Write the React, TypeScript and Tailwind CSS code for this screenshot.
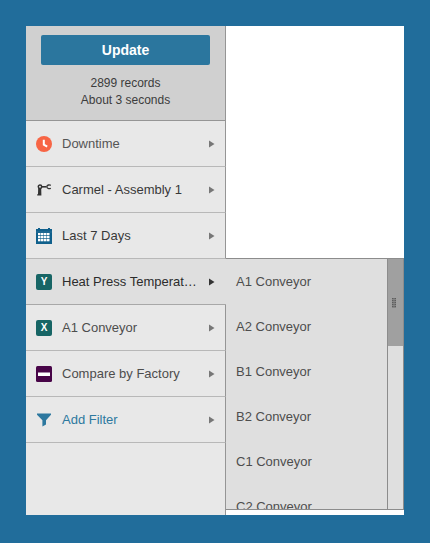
import type { ReactNode } from "react";

type Filter = {
  label: string;
  icon: ReactNode;
  tone: string;
  active?: boolean;
};

function ClockIcon() {
  return (
    <svg viewBox="0 0 16 16" className="size-4" aria-hidden="true">
      <circle cx="8" cy="8" r="8" fill="#f76545" />
      <path d="M7.8 3.8v4.8l3.4 2" fill="none" stroke="#fff" strokeWidth="2" />
    </svg>
  );
}

function RobotArmIcon() {
  return (
    <svg viewBox="0 0 16 16" className="size-4" aria-hidden="true">
      <path d="M2.2 5 5.2 5.2 5.4 13.4H1.2V12.6l.8-.6z" fill="#333" />
      <circle cx="4" cy="4.8" r="1.7" fill="#e8e8e8" stroke="#333" strokeWidth="1.5" />
      <path d="M5.4 4.8H10.4" stroke="#333" strokeWidth="1.6" />
      <path d="M14.8 3.4c-1-.6-3.8-.9-4 1.4.2 2.3 3 2 4 1.4" fill="none" stroke="#333" strokeWidth="1.3" />
    </svg>
  );
}

function CalendarIcon() {
  return (
    <svg viewBox="0 0 16 16" className="size-4" aria-hidden="true">
      <path d="M0 1h2V0h2v1h8V0h2v1h2v15H0z" fill="#10608c" />
      <path d="M0 4h16" stroke="#3a7da3" strokeWidth=".6" />
      <g fill="#fff">
        {[5, 8, 11].map((y) =>
          [2, 5, 8, 11].map((x) => <rect key={`${x}-${y}`} x={x} y={y} width="2.5" height="2.3" />),
        )}
      </g>
    </svg>
  );
}

function AxisIcon({ axis }: { axis: string }) {
  return (
    <span
      aria-hidden="true"
      className="flex size-4 items-center justify-center rounded-xs bg-[#176565] text-[10px] leading-none font-bold text-white"
    >
      {axis}
    </span>
  );
}

function CompareIcon() {
  return (
    <svg viewBox="0 0 16 16" className="size-4" aria-hidden="true">
      <rect width="16" height="16" rx="1.5" fill="#480548" />
      <rect x="2" y="6.5" width="12" height="3.5" fill="#fff" />
    </svg>
  );
}

function FunnelIcon() {
  return (
    <svg viewBox="0 0 16 16" className="size-4" aria-hidden="true">
      <path d="M1 1.5h14v1.2L10 8.2V12.5L6.4 14.5V8.2L1 2.7z" fill="#2d789f" />
    </svg>
  );
}

const filters: Filter[] = [
  { label: "Downtime", icon: <ClockIcon />, tone: "text-[#555]" },
  { label: "Carmel - Assembly 1", icon: <RobotArmIcon />, tone: "text-[#383838]" },
  { label: "Last 7 Days", icon: <CalendarIcon />, tone: "text-[#383838]" },
  { label: "Heat Press Temperat…", icon: <AxisIcon axis="Y" />, tone: "text-[#2c2c2c]", active: true },
  { label: "A1 Conveyor", icon: <AxisIcon axis="X" />, tone: "text-[#4d4d4d]" },
  { label: "Compare by Factory", icon: <CompareIcon />, tone: "text-[#4d4d4d]" },
  { label: "Add Filter", icon: <FunnelIcon />, tone: "text-[#2d789f]" },
];

const options = ["A1 Conveyor", "A2 Conveyor", "B1 Conveyor", "B2 Conveyor", "C1 Conveyor", "C2 Conveyor"];

function FilterRow({ filter }: { filter: Filter }) {
  return (
    <li>
      <button
        type="button"
        aria-haspopup="menu"
        aria-expanded={!!filter.active}
        className={`flex h-[46px] w-full items-center border-b px-2.5 text-left ${filter.tone} ${
          filter.active
            ? "border-b-[#a8a8a8] bg-[#dfdfdf]"
            : "border-r border-r-[#959595] border-b-[#b8b8b8] bg-[#e8e8e8]"
        }`}
      >
        {filter.icon}
        <span className="ml-2.5 flex-1 whitespace-nowrap">{filter.label}</span>
        <svg
          viewBox="0 0 6 8"
          className={`h-2 w-1.5 ${filter.active ? "mr-px text-[#333]" : "text-[#777]"}`}
          aria-hidden="true"
        >
          <path d="M0 .5v7L5.5 4z" fill="currentColor" />
        </svg>
      </button>
    </li>
  );
}

function OptionsMenu() {
  return (
    <div className="mb-[5px] flex h-[252px] border-y border-r border-[#8c8c8c] bg-[#dfdfdf]">
      <ul className="flex-1 overflow-hidden text-[#4d4d4d]">
        {options.map((option) => (
          <li key={option}>
            <button type="button" className="h-[45px] w-full px-2.5 text-left">
              {option}
            </button>
          </li>
        ))}
      </ul>
      <div className="w-4 border-l border-[#8c8c8c]">
        <div className="flex h-[87px] items-center justify-center bg-[#a0a0a0] pr-[3px]">
          <svg viewBox="0 0 4 10" className="h-2.5 w-1" aria-hidden="true">
            <rect width="4" height="10" fill="#858585" />
            <path d="M0 .5h4M0 2.5h4M0 4.5h4M0 6.5h4M0 8.5h4" stroke="#5c5c5c" strokeDasharray="1 .5" />
          </svg>
        </div>
      </div>
    </div>
  );
}

export default function App() {
  return (
    <div className="flex min-h-screen bg-[#216d9b] px-[26px] pt-[26px] pb-7 font-['Liberation_Sans',Arial,sans-serif] text-[13px]">
      <main className="flex flex-1 bg-white">
        <aside className="flex w-[200px] flex-col">
          <header className="border-r border-b border-[#959595] bg-[#d0d0d0] px-[15px] pt-[9px] pb-[11px] text-center text-[12px] leading-[17px] text-[#3c3c3c]">
            <button
              type="button"
              className="mb-[10px] h-[30px] w-full rounded-xs bg-[#2b769e] text-[14px] font-bold text-white"
            >
              Update
            </button>
            <p>2899 records</p>
            <p>About 3 seconds</p>
          </header>
          <ul>
            {filters.map((filter) => (
              <FilterRow key={filter.label} filter={filter} />
            ))}
          </ul>
          <div className="flex-1 border-r border-[#959595] bg-[#e8e8e8]" />
        </aside>
        <section className="flex flex-1 flex-col justify-end">
          <OptionsMenu />
        </section>
      </main>
    </div>
  );
}
